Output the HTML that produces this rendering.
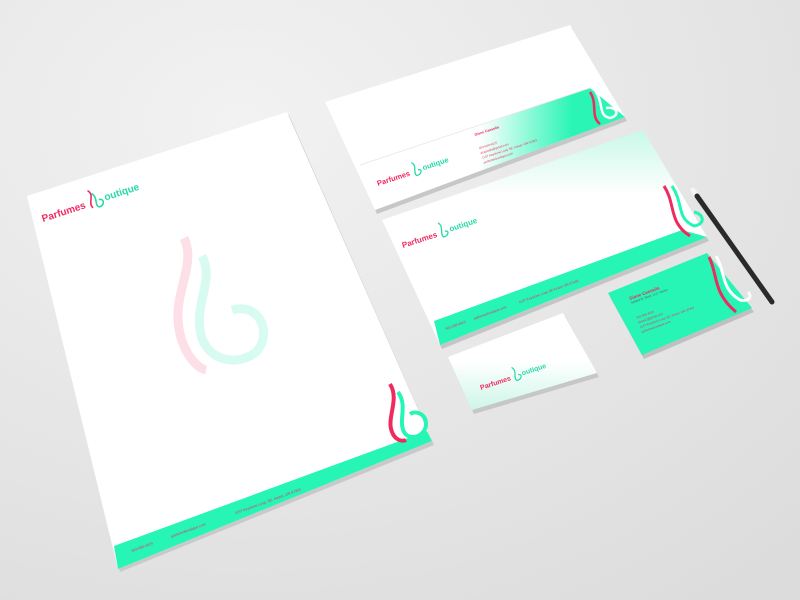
<!DOCTYPE html>
<html><head><meta charset="utf-8"><style>
html,body{margin:0;padding:0;width:800px;height:600px;overflow:hidden}
svg{display:block}
text{font-family:"Liberation Sans",sans-serif}
</style></head><body>
<svg width="800" height="600" viewBox="0 0 800 600" xmlns="http://www.w3.org/2000/svg">
<defs>
<radialGradient id="bg" cx="0.3" cy="0.2" r="1">
<stop offset="0" stop-color="#f2f2f2"/><stop offset="1" stop-color="#dcdcdc"/>
</radialGradient>
<linearGradient id="envg" x1="0" y1="0" x2="1" y2="0">
<stop offset="0.45" stop-color="#ffffff"/><stop offset="0.8" stop-color="#2af5b5"/>
</linearGradient>
<linearGradient id="topg" x1="0" y1="0" x2="0" y2="1">
<stop offset="0" stop-color="#c8f8e8"/><stop offset="0.3" stop-color="#ffffff"/>
</linearGradient>
<linearGradient id="cardg" x1="0" y1="0" x2="0" y2="1">
<stop offset="0.5" stop-color="#ffffff"/><stop offset="1" stop-color="#cdf6e8"/>
</linearGradient>
</defs>
<rect width="800" height="600" fill="url(#bg)"/>

<!-- letterhead -->
<polygon points="29,200 289,115 434,445 120,572" fill="#c9c9c9"/>
<polygon points="27,196 287,112 432,441 118,569" fill="#ffffff"/>
<polygon points="114,546 427,431 432,441 118,569" fill="#26f5b5"/>
<g opacity="0.35">
<path d="M184,238 C196,262 176,290 178,320 C180,350 196,368 206,370" fill="none" stroke="#f7a5bd" stroke-width="9"/>
<path d="M202,256 C214,280 196,300 200,330 C204,360 236,368 256,352 C272,336 262,302 232,310" fill="none" stroke="#8ef5d6" stroke-width="9"/>
</g>
<path d="M390,384 C400,400 386,418 392,432 C395,440 402,442 406,440" fill="none" stroke="#ee2b5f" stroke-width="4"/>
<path d="M398,392 C408,406 398,420 404,432 C410,442 426,436 426,424 C426,414 416,410 410,414" fill="none" stroke="#26f5b5" stroke-width="4"/>
<g transform="translate(43,222) rotate(-18)">
<text x="0" y="0" font-size="10" font-weight="bold" fill="#ee2b5f">Parfumes</text>
<path d="M52,-16 C58,-10 48,-4 52,2" fill="none" stroke="#ee2b5f" stroke-width="1.6"/>
<path d="M55,-12 C60,-6 54,0 58,3 C64,4 66,-4 60,-4" fill="none" stroke="#26d9a5" stroke-width="1.6"/>
<text x="66" y="-1" font-size="10" font-weight="bold" fill="#26d9a5">outique</text>
</g>
<g transform="translate(132,552) rotate(-20)" font-size="3.6" fill="#ee2b5f">
<text x="0" y="0">503-690-4419</text><text x="42" y="0">parfumesboutique.com</text><text x="110" y="0">1137 Keystone Loop, SE, Keizer, OR 97303</text>
</g>

<!-- envelope back -->
<polygon points="327,106 572,28 627,121 377,214" fill="#c7c7c7"/>
<polygon points="325,102 570,25 625,117 375,210" fill="#ffffff"/>
<polygon points="360,166 590,88 625,117 375,210" fill="url(#envg)"/>
<line x1="360" y1="165" x2="590" y2="88" stroke="#e4e4e4" stroke-width="0.7"/>
<path d="M590,92 C598,104 590,116 600,124" fill="none" stroke="#ee2b5f" stroke-width="2.5"/>
<path d="M596,92 C604,104 598,116 610,118 C620,116 618,106 606,108" fill="none" stroke="#fff" stroke-width="2.5"/>
<g transform="translate(378,186) rotate(-18)">
<text font-size="7.5" font-weight="bold" fill="#ee2b5f">Parfumes</text>
<path d="M39,-12 C44,-7 37,-2 40,2 C45,3 48,-3 43,-3" fill="none" stroke="#26d9a5" stroke-width="1.3"/>
<text x="48" y="-1" font-size="7.5" font-weight="bold" fill="#26d9a5">outique</text>
</g>
<g transform="translate(475,136) rotate(-18)" font-size="3" fill="#ee2b5f">
<text font-weight="bold" font-size="3.6">Diane Caesella</text>
<text y="14">503-690-4419</text><text y="19">dcaesella@gmail.com</text><text y="24">1137 Keystone Loop SE, Keizer, OR 97303</text><text y="29">parfumesboutique.com</text>
</g>

<!-- envelope front -->
<polygon points="384,224 645,134 709,241 442,349" fill="#c5c5c5"/>
<polygon points="382,220 643,130 707,237 440,345" fill="url(#topg)"/>
<polygon points="434,321 682,230 707,237 440,345" fill="#26f5b5"/>
<path d="M664,186 C676,204 668,222 690,236" fill="none" stroke="#ee2b5f" stroke-width="3"/>
<path d="M672,186 C684,204 676,218 694,226 C706,224 704,214 694,212" fill="none" stroke="#26f5b5" stroke-width="3"/>
<g transform="translate(403,248) rotate(-18)">
<text font-size="8" font-weight="bold" fill="#ee2b5f">Parfumes</text>
<path d="M41,-13 C46,-8 39,-2 42,2 C47,3 50,-3 45,-3" fill="none" stroke="#26d9a5" stroke-width="1.3"/>
<text x="50" y="-1" font-size="8" font-weight="bold" fill="#26d9a5">outique</text>
</g>
<g transform="translate(446,330) rotate(-20)" font-size="3.4" fill="#ee2b5f">
<text>503-936-4415</text><text x="30">parfumesboutique.com</text><text x="78">1137 Keystone Loop SE Keizer OR 97303</text>
</g>

<!-- white card -->
<polygon points="450,361 565,316 599,377 474,414" fill="#c7c7c7"/>
<polygon points="448,357 563,313 597,373 472,410" fill="url(#cardg)"/>
<g transform="translate(481,390) rotate(-18)">
<text font-size="7" font-weight="bold" fill="#ee2b5f">Parfumes</text>
<path d="M36,-12 C41,-7 34,-2 37,2 C42,3 45,-3 40,-3" fill="none" stroke="#26d9a5" stroke-width="1.2"/>
<text x="44" y="-1" font-size="7" font-weight="bold" fill="#26d9a5">outique</text>
</g>

<!-- green card -->
<polygon points="610,297 709,257 754,312 644,359" fill="#c0c0c0"/>
<polygon points="608,293 707,253 752,308 642,355" fill="#26f5b5"/>
<path d="M709,257 C718,274 712,292 736,312" fill="none" stroke="#ee2b5f" stroke-width="3"/>
<path d="M716,256 C726,272 720,288 740,300 C750,302 752,296 748,292" fill="none" stroke="#ffffff" stroke-width="3"/>
<g transform="translate(630,300) rotate(-20)" font-size="3" fill="#ee2b5f">
<text font-weight="bold" font-size="4.5">Diane Caesella</text>
<text y="4" fill="#555">Sebpet N. Store, LLC. Owner</text>
<text y="20">503 936 4415</text><text y="25">dianeC@gmail.com</text><text y="30">1137 Keystone Loop SE, Keizer, OR 97303</text><text y="35">parfumesboutique.com</text>
</g>

<!-- pen -->
<line x1="693" y1="190" x2="696" y2="195" stroke="#f4f4f4" stroke-width="5" stroke-linecap="round"/>
<line x1="697" y1="196" x2="772" y2="302" stroke="#2a2a2a" stroke-width="5" stroke-linecap="round"/>
</svg>
</body></html>
